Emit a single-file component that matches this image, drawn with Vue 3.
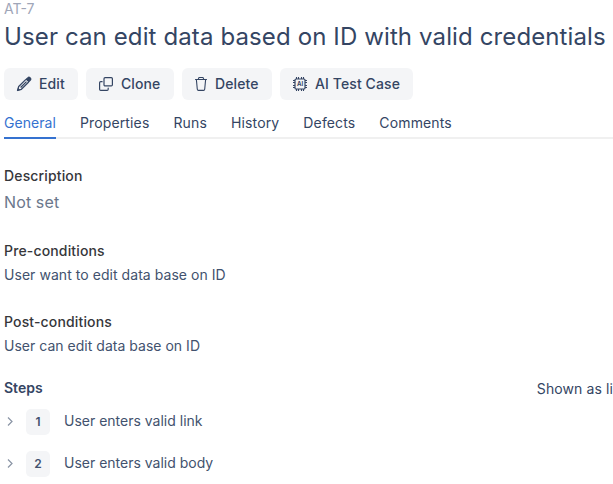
<script setup>
const tabs = ['General', 'Properties', 'Runs', 'History', 'Defects', 'Comments']
const steps = ['User enters valid link', 'User enters valid body']
</script>

<template>
  <main class="case">
    <div class="case-id">AT-7</div>
    <h1>User can edit data based on ID with valid credentials</h1>

    <div class="actions">
      <button class="edit">
        <svg width="16" height="16" viewBox="0 0 16 16" fill="none">
          <path d="M10.3 3.2 12 1.6c.6-.6 1.3-.6 1.9 0l.5.5c.6.6.6 1.3 0 1.9l-1.6 1.7z" fill="#344563" stroke="#344563" stroke-width="1.2" />
          <path d="M9.9 3.4 2.7 10.5 1.5 14.5l3.9-1.2 7.3-7.3M4.6 11.5l5.9-5.9" stroke="#344563" stroke-width="1.25" stroke-linejoin="round" />
          <path d="m1.1 14.9 1-3.2 2.2 2.2z" fill="#344563" />
        </svg>
        <span>Edit</span>
      </button>
      <button class="clone">
        <svg width="16" height="16" viewBox="0 0 16 16" fill="none" stroke="#344563" stroke-width="1.2" stroke-linejoin="round">
          <rect x="6" y="1.6" width="8.4" height="8.3" rx="1.1" />
          <path d="M4.1 5.7H2.7c-.7 0-1.1.4-1.1 1.1v6.5c0 .7.4 1.1 1.1 1.1h6.4c.7 0 1.1-.4 1.1-1.1v-1.2" stroke-linecap="round" />
        </svg>
        <span>Clone</span>
      </button>
      <button class="delete">
        <svg width="14" height="16" viewBox="0 0 14 16" fill="none" stroke="#344563" stroke-width="1.1" stroke-linecap="round" stroke-linejoin="round">
          <path d="M1.5 3.5h11M4.2 3.4l.8-1.9h4l.8 1.9M2.4 3.7l.9 9.6c.1.8.4 1.1 1.1 1.1h5.2c.7 0 1-.3 1.1-1.1l.9-9.6" />
        </svg>
        <span>Delete</span>
      </button>
      <button class="ai">
        <svg width="16" height="16" viewBox="0 0 16 16" fill="none" stroke="#344563">
          <rect x="3" y="3" width="10" height="10" rx="1" stroke-width="1.2" />
          <path d="M4.5 1v2M6.5 1v2M9.5 1v2M11.5 1v2M4.5 13v2M6.5 13v2M9.5 13v2M11.5 13v2M1 4.5h2M1 6.5h2M1 9.5h2M1 11.5h2M13 4.5h2M13 6.5h2M13 9.5h2M13 11.5h2" stroke-width="1.1" />
          <text x="8" y="10.2" text-anchor="middle" class="chip-label">AI</text>
        </svg>
        <span>AI Test Case</span>
      </button>
    </div>

    <nav class="tabs">
      <a v-for="(tab, i) in tabs" :key="tab" :class="{ active: i === 0 }">{{ tab }}</a>
    </nav>

    <section class="description">
      <h2>Description</h2>
      <p class="empty">Not set</p>
    </section>
    <section class="pre">
      <h2>Pre-conditions</h2>
      <p>User want to edit data base on ID</p>
    </section>
    <section class="post">
      <h2>Post-conditions</h2>
      <p>User can edit data base on ID</p>
    </section>

    <div class="steps-head">
      <h2>Steps</h2>
      <span>Shown as li</span>
    </div>
    <ol class="steps">
      <li v-for="(step, i) in steps" :key="step">
        <svg width="12" height="12" viewBox="0 0 12 12" fill="none" stroke="#8993a4" stroke-width="1.2">
          <path d="m4 1.5 4 4-4 4" />
        </svg>
        <span class="number">{{ i + 1 }}</span>
        <span class="text">{{ step }}</span>
      </li>
    </ol>
  </main>
</template>

<style>
body {
  background: #fff;
  overflow: hidden;
}
</style>

<style scoped>
.case {
  box-sizing: border-box;
  width: 613px;
  height: 484px;
  padding-left: 4px;
  overflow: hidden;
  font: 14px/20px Inter, sans-serif;
  color: #344563;
  white-space: nowrap;
}
h1, h2, p, ol {
  margin: 0;
  padding: 0;
}
.case-id {
  height: 21px;
  line-height: 18px;
  color: #a0a6b8;
}
h1 {
  font-size: 24px;
  font-weight: 400;
  line-height: 32px;
  letter-spacing: 0.12px;
}
.actions {
  display: flex;
  gap: 8px;
  margin-top: 15px;
}
button {
  box-sizing: border-box;
  display: flex;
  align-items: center;
  gap: 7px;
  height: 32px;
  padding: 0 0 0 12px;
  border: 0;
  border-radius: 6px;
  background: #f4f5f7;
  color: #344563;
  font: 500 14px/20px Inter, sans-serif;
  letter-spacing: 0.1px;
}
button svg {
  flex: none;
}
.edit { width: 74px; }
.clone { width: 88px; }
.delete { width: 90px; }
.ai { width: 133px; }
.chip-label {
  font: 700 6px Inter, sans-serif;
  letter-spacing: 0;
  fill: #344563;
  stroke: none;
}
.tabs {
  display: flex;
  gap: 24px;
  box-sizing: border-box;
  height: 26px;
  margin-top: 13px;
  border-bottom: 2px solid #f0f0f0;
  letter-spacing: 0.14px;
}
.tabs a {
  height: 24px;
}
.tabs .active {
  letter-spacing: 0.05px;
  color: #3572d0;
  border-bottom: 2px solid #3572d0;
}
section {
  display: flex;
  flex-direction: column;
  gap: 4px;
}
h2 {
  font-size: 14px;
  font-weight: 500;
  line-height: 20px;
  letter-spacing: 0.15px;
}
section h2 {
  color: #36373b;
}
p {
  color: #42526e;
  letter-spacing: 0.05px;
}
.description {
  gap: 6px;
  margin-top: 27px;
}
.empty {
  font-size: 16px;
  color: #6b778c;
  letter-spacing: 0.12px;
}
.pre {
  margin-top: 29px;
}
.post {
  margin-top: 27px;
}
.post p {
  letter-spacing: 0.02px;
}
.steps-head {
  display: flex;
  justify-content: space-between;
  margin-top: 22px;
}
.steps-head h2 {
  font-weight: 600;
  letter-spacing: 0;
}
.steps-head span {
  padding-top: 1px;
  letter-spacing: 0.1px;
}
.steps {
  display: flex;
  flex-direction: column;
  gap: 16px;
  margin-top: 10px;
  list-style: none;
}
li {
  display: flex;
  align-items: center;
  height: 26px;
}
.number {
  width: 24px;
  margin: 0 14px 0 10px;
  border-radius: 5px;
  background: #f4f5f7;
  color: #42526e;
  font-size: 12px;
  font-weight: 600;
  line-height: 26px;
  text-align: center;
}
.text {
  height: 22px;
  line-height: 20px;
  color: #42526e;
}
</style>
